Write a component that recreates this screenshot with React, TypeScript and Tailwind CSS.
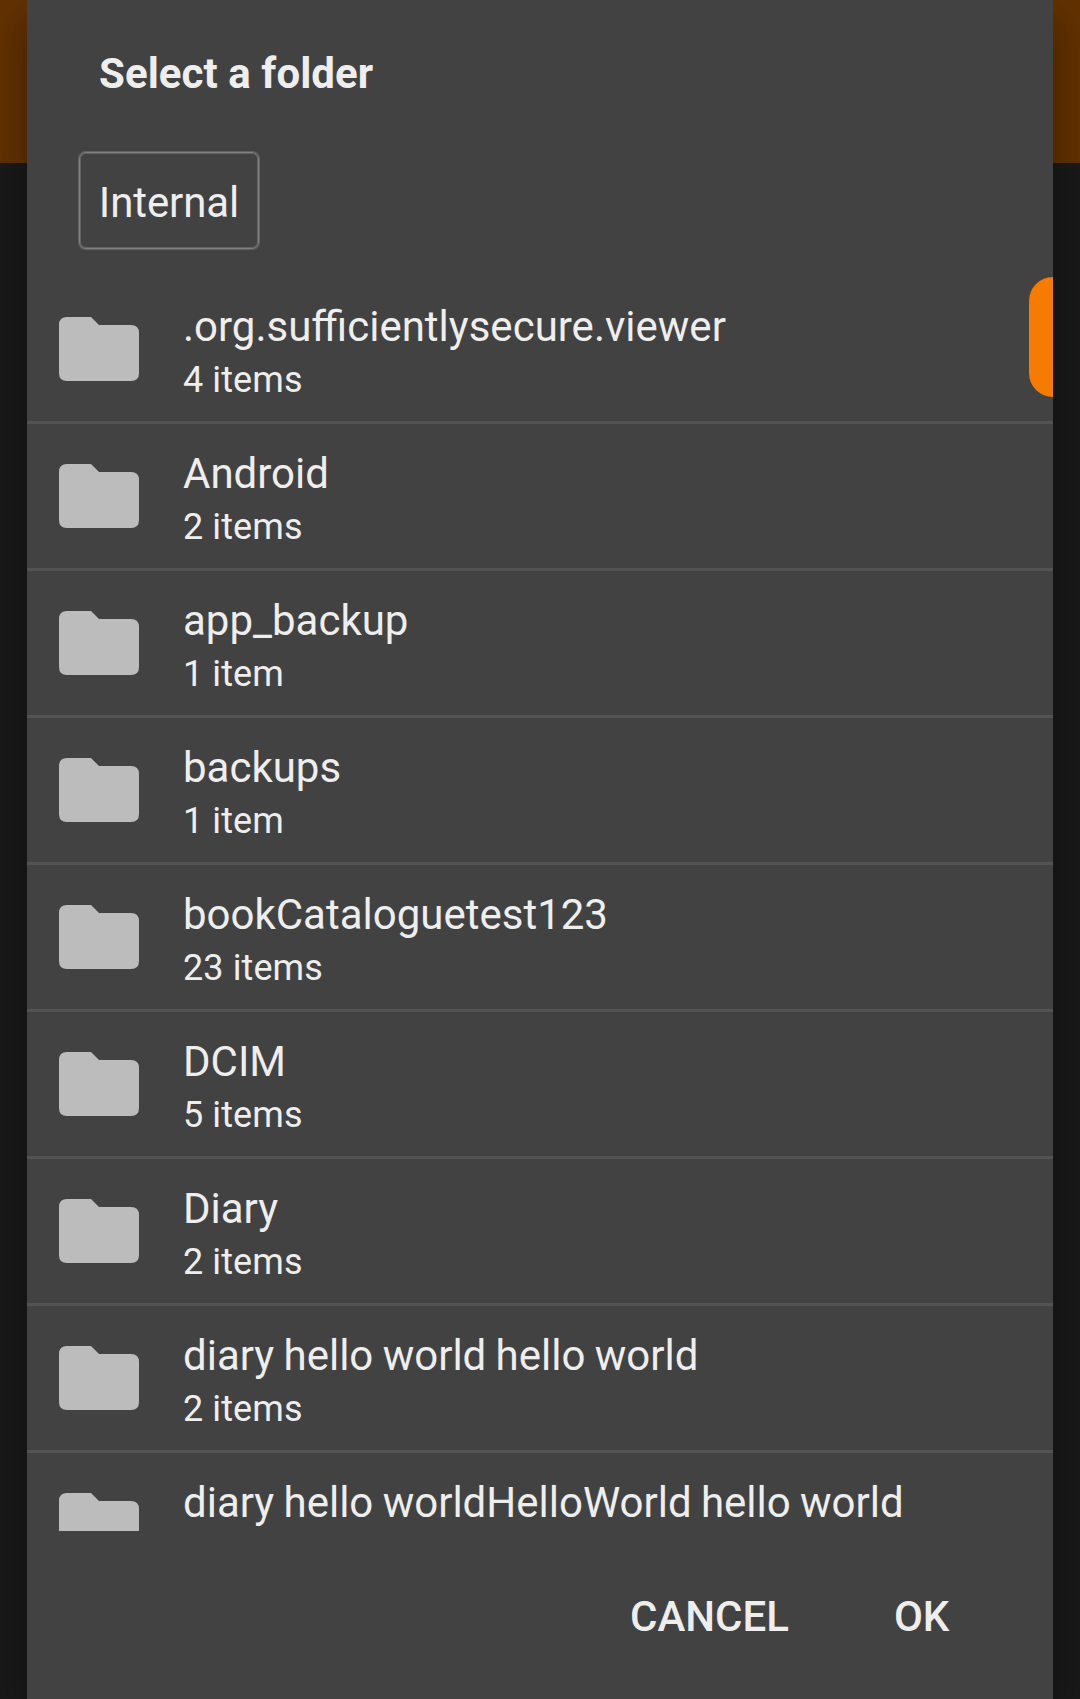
const folders = [
  ['.org.sufficientlysecure.viewer', '4 items'],
  ['Android', '2 items'],
  ['app_backup', '1 item'],
  ['backups', '1 item'],
  ['bookCataloguetest123', '23 items'],
  ['DCIM', '5 items'],
  ['Diary', '2 items'],
  ['diary hello world hello world', '2 items'],
  ['diary hello worldHelloWorld hello world', ''],
];

function FolderIcon() {
  return (
    <svg className="ml-8 mt-10 h-16 w-20 shrink-0" viewBox="0 0 80 64" fill="#bcbcbc">
      <path d="M8 0H32L40 8H72Q80 8 80 16V56Q80 64 72 64H8Q0 64 0 56V8Q0 0 8 0Z" />
    </svg>
  );
}

export default function App() {
  return (
    <div className="relative flex h-[1699px] w-[1080px] justify-center overflow-hidden bg-[#191919] font-[Roboto,sans-serif] text-[#eeeeee]">
      <div className="absolute inset-x-0 top-0 h-[163px] bg-[#613100]" />
      <main className="relative flex w-[1026px] flex-col bg-[#424242] shadow-[0_20px_36px_rgba(0,0,0,0.35)]">
        <h1 className="ml-[72px] mt-[49px] h-[50px] whitespace-nowrap text-[42px] font-bold leading-[50px] tracking-[0.06px]">Select a folder</h1>
        <div className="ml-[52px] mt-[53px] flex h-[97px] w-[180px] items-center justify-center rounded-[7px] border border-[#808080] pt-[3px] text-[42px] tracking-[-0.1px] shadow-[0_0_0_1px_#626262,inset_0_0_0_1px_#626262]">Internal</div>
        <div className="relative mt-7 h-[1254px] overflow-hidden">
          {folders.map(([name, count]) => (
            <div key={name} className="flex h-[147px] border-b-[3px] border-[#535353]">
              <FolderIcon />
              <div className="ml-11 whitespace-nowrap pt-[25px]">
                <div className="text-[42px] leading-[50px] [word-spacing:-1.1px]">{name}</div>
                <div className="mt-[7px] text-[36px] leading-[42px] tracking-[0.1px]">{count}</div>
              </div>
            </div>
          ))}
          <div className="absolute right-0 top-0 h-[120px] w-6 rounded-l-3xl bg-[#f57c00]" />
        </div>
        <div className="mt-[61px] flex text-[42px] font-medium leading-[50px]">
          <button className="ml-[603px]">CANCEL</button>
          <button className="ml-[105px]">OK</button>
        </div>
      </main>
    </div>
  );
}
